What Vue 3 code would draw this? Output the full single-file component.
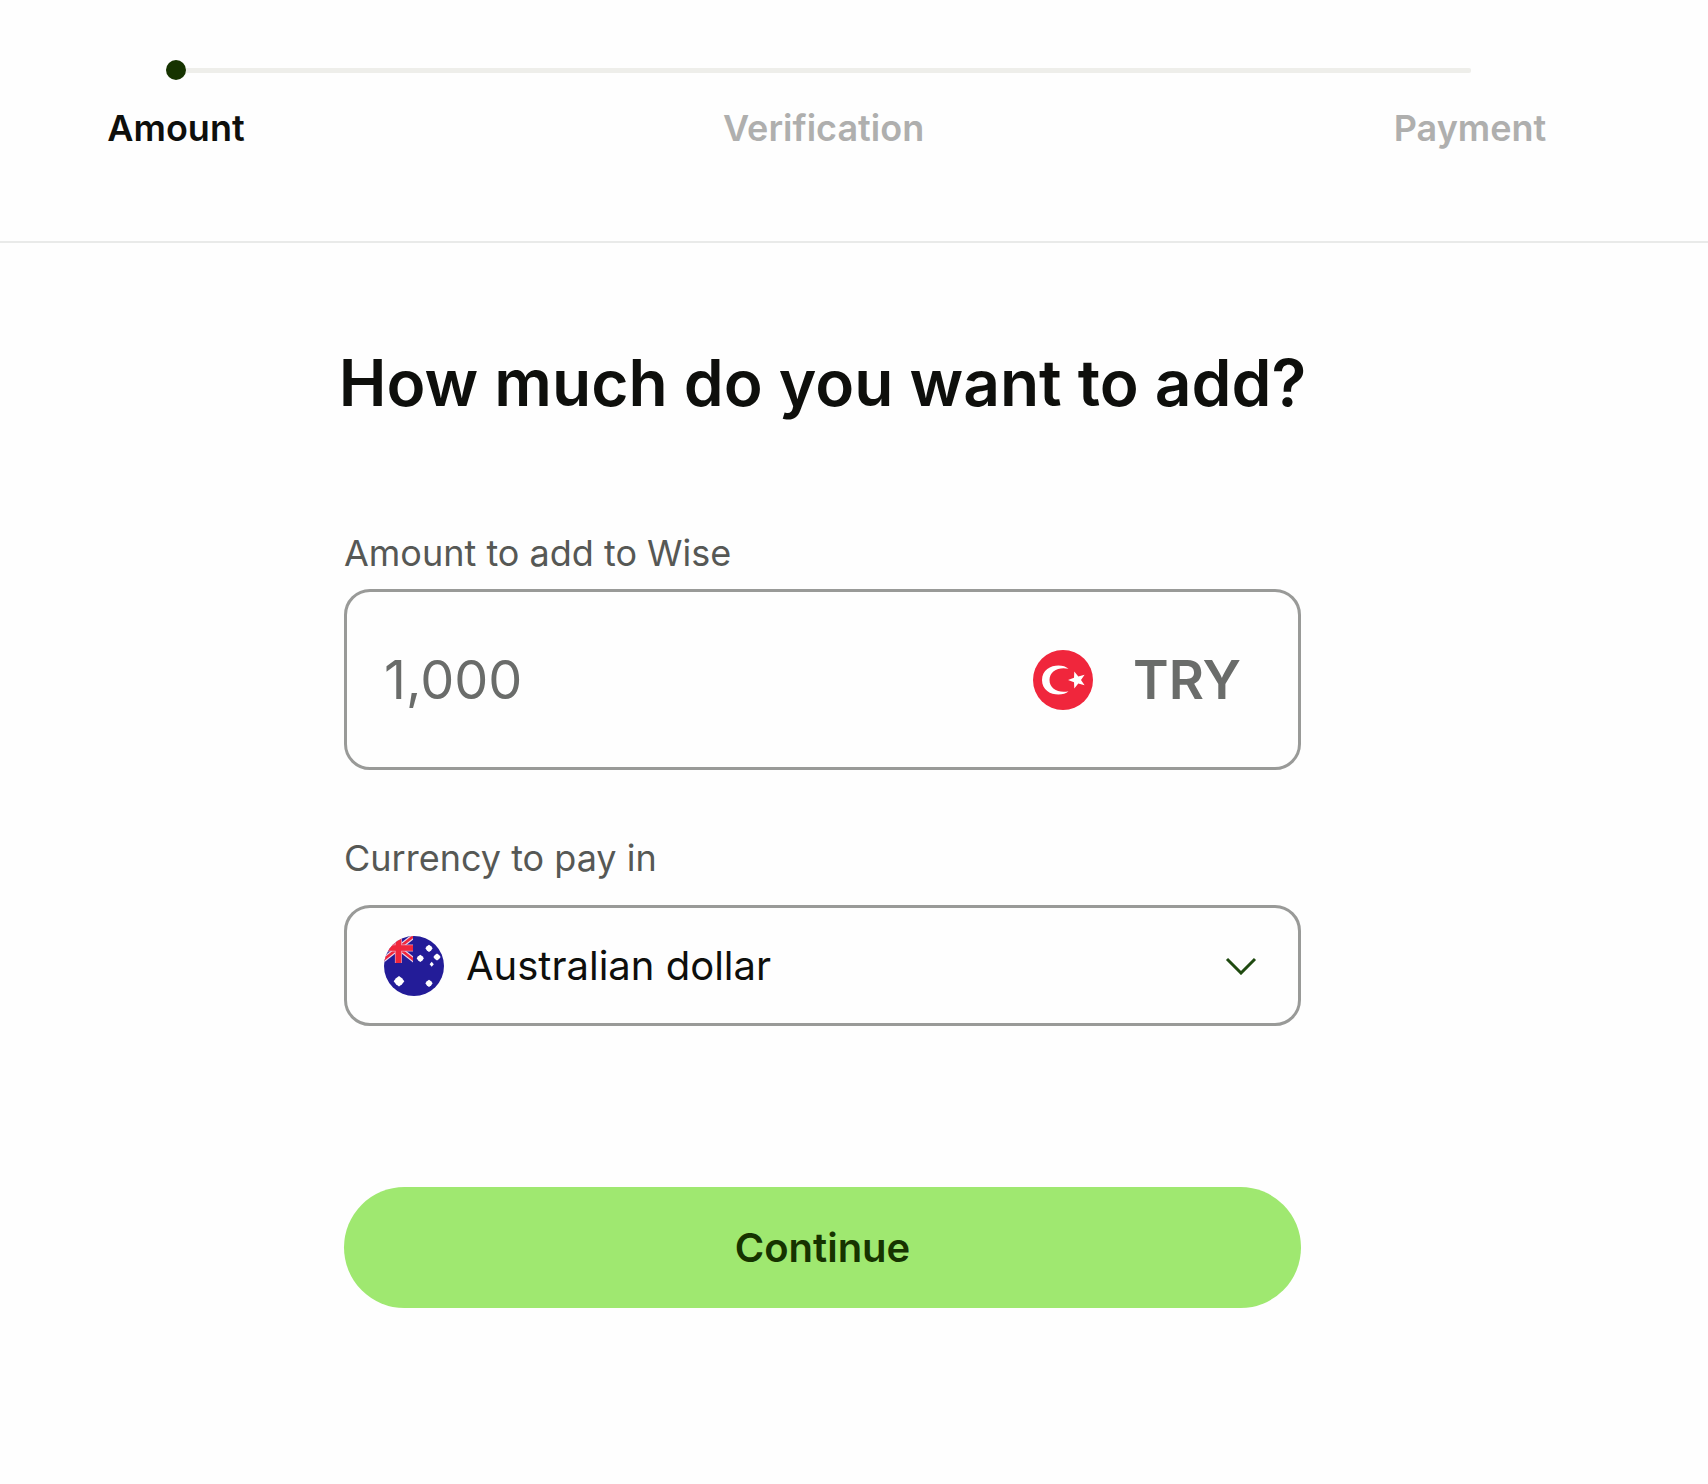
<script setup>
import { ref } from 'vue'

const steps = ['Amount', 'Verification', 'Payment']
const current = ref(0)
const amount = ref('1,000')
const currency = ref('AUD')
const currencies = [{ code: 'AUD', name: 'Australian dollar' }]
</script>

<template>
  <div class="page">
    <header class="header">
      <div class="track">
        <span class="dot"></span>
        <span class="line"></span>
      </div>
      <ol class="steps">
        <li v-for="(step, i) in steps" :key="step" class="step" :class="{ active: i === current }">
          {{ step }}
        </li>
      </ol>
    </header>

    <main class="main">
      <form class="form" @submit.prevent>
        <h1 class="title">How much do you want to add?</h1>

        <label class="label" for="amount">Amount to add to Wise</label>
        <div class="box amount-box">
          <input id="amount" v-model="amount" class="amount" type="text" inputmode="decimal" />
          <svg class="flag" viewBox="0 0 60 60" aria-hidden="true">
            <circle cx="30" cy="30" r="30" fill="#f0263c" />
            <path
              d="M35.5 18.8C29 12.5 9 14.5 9 30S29 47.5 35.5 41.2C26 43.5 16.5 39 16.5 30S26 16.5 35.5 18.8Z"
              fill="#fff"
            />
            <path
              d="M35 30L41 27.8L41.3 21.5L45.3 26.5L51.6 24.8L48 30L51.6 35.2L45.3 33.5L41.3 38.5L41 32.2Z"
              fill="#fff"
            />
          </svg>
          <span class="code">TRY</span>
        </div>

        <label class="label" for="currency">Currency to pay in</label>
        <div class="box select-box">
          <svg class="flag" viewBox="0 0 60 60" aria-hidden="true">
            <defs>
              <clipPath id="au-round"><circle cx="30" cy="30" r="30" /></clipPath>
              <clipPath id="au-canton"><rect x="-1" y="-3" width="30" height="30" /></clipPath>
            </defs>
            <g clip-path="url(#au-round)">
              <rect width="60" height="60" fill="#231c98" />
              <g clip-path="url(#au-canton)">
                <path d="M-2 25L31 -1M-2 -1L31 25" stroke="#e9d3e8" stroke-width="5" />
                <path d="M-2 25L31 -1M-2 -1L31 25" stroke="#f0263c" stroke-width="2.6" />
                <path d="M14.4 -3V27M-1 12H29" stroke="#e9a3bc" stroke-width="7" />
                <path d="M14.4 -3V27M-1 12H29" stroke="#f0263c" stroke-width="5.6" />
              </g>
              <g fill="#fff">
                <path d="M15 40L18 42.3L20.3 45.3L18 48.3L15 50.6L12 48.3L9.7 45.3L12 42.3Z" />
                <path d="M45 8.7L47.1 10.2L48.6 12.3L47.1 14.4L45 15.9L42.9 14.4L41.4 12.3L42.9 10.2Z" />
                <path d="M36.3 18.7L38.4 20.2L39.9 22.3L38.4 24.4L36.3 25.9L34.2 24.4L32.7 22.3L34.2 20.2Z" />
                <path d="M53 17.4L55.1 18.9L56.6 21L55.1 23.1L53 24.6L50.9 23.1L49.4 21L50.9 18.9Z" />
                <path d="M45 43.7L47.1 45.2L48.6 47.3L47.1 49.4L45 50.9L42.9 49.4L41.4 47.3L42.9 45.2Z" />
                <path d="M47.7 25.8L49.8 28.3L47.7 30.8L45.6 28.3Z" />
              </g>
            </g>
          </svg>
          <select id="currency" v-model="currency" class="select">
            <option v-for="c in currencies" :key="c.code" :value="c.code">{{ c.name }}</option>
          </select>
          <svg class="chevron" viewBox="0 0 32 18" aria-hidden="true">
            <path d="M2 2L16 16L30 2" fill="none" stroke="#1f4a10" stroke-width="3" />
          </svg>
        </div>

        <button class="submit" type="submit">Continue</button>
      </form>
    </main>
  </div>
</template>

<style>
body {
  margin: 0;
  background: #fefefe;
}
</style>

<style scoped>
.page {
  font-family: Inter, 'Liberation Sans', sans-serif;
  color: #0e0f0c;
}

.header {
  padding: 60px 138px 93px 76px;
  border-bottom: 2px solid #e9eae9;
}

.track {
  display: flex;
  align-items: center;
  padding: 0 99px 0 90px;
}

.dot {
  width: 20px;
  height: 20px;
  border-radius: 50%;
  background: #163300;
}

.line {
  flex: 1;
  height: 5px;
  border-radius: 0 2px 2px 0;
  background: #eeeeea;
}

.steps {
  display: flex;
  justify-content: space-between;
  margin: 0;
  padding: 28px 0 0;
  list-style: none;
}

.step {
  width: 200px;
  text-align: center;
  font-size: 36px;
  line-height: 40px;
  font-weight: 600;
  color: #afafae;
}

.step.active {
  color: #0e0f0c;
}

.main {
  padding: 100px 63px 176px 0;
}

.form {
  display: flex;
  flex-direction: column;
  max-width: 957px;
  margin: 0 auto;
}

.title {
  align-self: center;
  margin: 0 0 108px;
  font-size: 64px;
  line-height: 80px;
  font-weight: 600;
  white-space: nowrap;
}

.label {
  font-size: 36px;
  line-height: 44px;
  color: #565855;
}

.box {
  display: flex;
  align-items: center;
  box-sizing: border-box;
  border: 3px solid #999a98;
  border-radius: 26px;
  padding: 0 41px 0 37px;
}

.amount-box {
  height: 181px;
  margin: 14px 0 66px;
  padding-right: 57px;
}

.amount {
  flex: 1;
  min-width: 0;
  padding: 0;
  border: 0;
  outline: 0;
  background: none;
  font: 400 54px/68px Inter, 'Liberation Sans', sans-serif;
  color: #6a6c6a;
}

.flag {
  flex: none;
  width: 60px;
  height: 60px;
}

.code {
  margin-left: 40px;
  font-size: 54px;
  line-height: 68px;
  font-weight: 600;
  color: #6a6c6a;
}

.select-box {
  height: 121px;
  margin: 25px 0 161px;
}

.select {
  flex: 1;
  min-width: 0;
  margin-left: 22px;
  padding: 0;
  border: 0;
  outline: 0;
  appearance: none;
  background: none;
  font: 400 40px/52px Inter, 'Liberation Sans', sans-serif;
  color: #0e0f0c;
}

.chevron {
  flex: none;
  width: 32px;
  height: 18px;
}

.submit {
  height: 121px;
  border: 0;
  border-radius: 61px;
  background: #9fe870;
  font: 600 40px/52px Inter, 'Liberation Sans', sans-serif;
  color: #163300;
}
</style>
